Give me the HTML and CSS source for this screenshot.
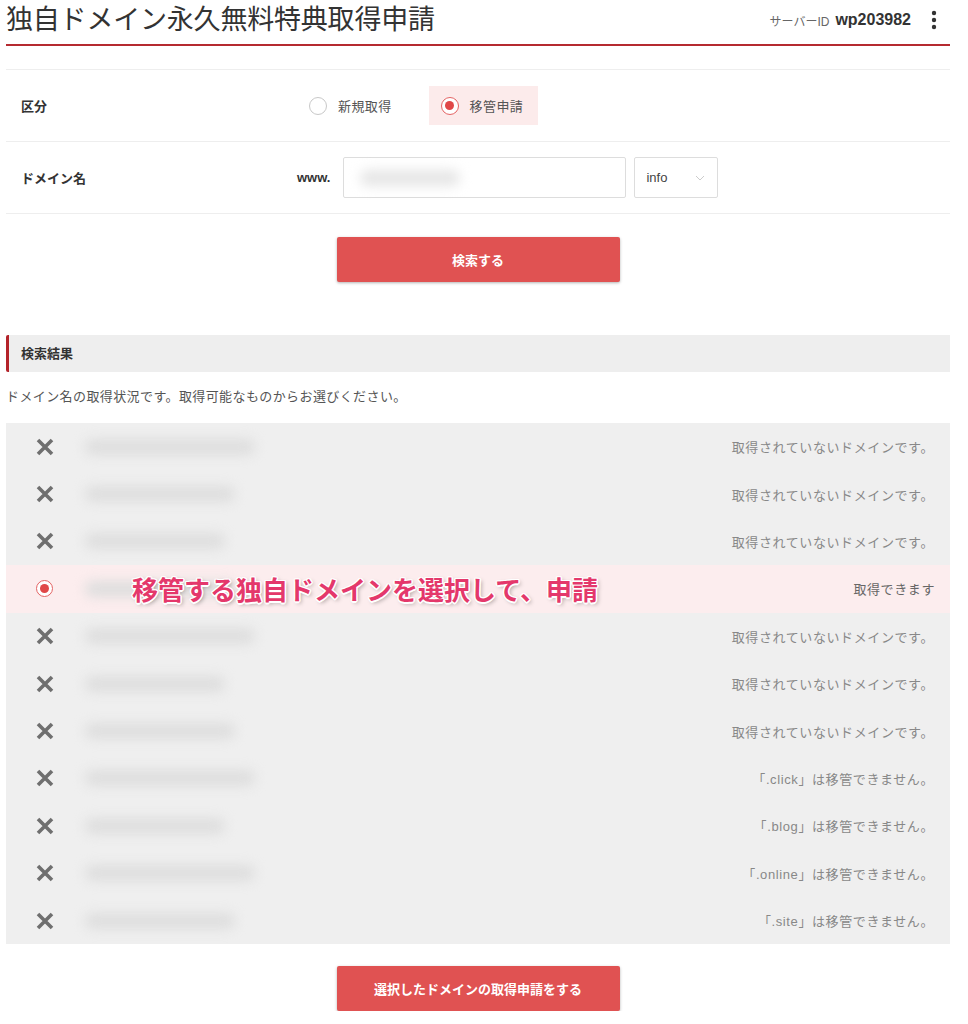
FILE: index.html
```html
<!DOCTYPE html>
<html lang="ja">
<head>
  <meta charset="UTF-8"/>
  <meta name="viewport" content="width=device-width, initial-scale=1.0"/>
  <title>独自ドメイン永久無料特典取得申請</title>
  <link rel="stylesheet" href="styles.css">
</head>
<body>
  <div class="page">

    <!-- Header -->
    <div class="header">
      <h1 class="title">独自ドメイン永久無料特典取得申請</h1>
      <div class="server">
        <span class="server-label">サーバーID</span>
        <span class="server-id">wp203982</span>
        <svg class="kebab" width="6" height="20" viewBox="0 0 6 20">
          <circle cx="3" cy="3" r="2.2" fill="#333"/>
          <circle cx="3" cy="10" r="2.2" fill="#333"/>
          <circle cx="3" cy="17" r="2.2" fill="#333"/>
        </svg>
      </div>
    </div>

    <!-- Form -->
    <div class="form">
      <div class="form-row">
        <div class="form-label">区分</div>
        <div class="form-field">
          <label class="option"><span class="radio"></span>新規取得</label>
          <label class="option option-on"><span class="radio radio-on"></span>移管申請</label>
        </div>
      </div>
      <div class="form-row">
        <div class="form-label">ドメイン名</div>
        <div class="form-field">
          <span class="www">www.</span>
          <div class="text-box"><span class="blur blur-input"></span></div>
          <div class="select-box">
            <span>info</span>
            <svg width="10" height="6" viewBox="0 0 10 6"><polyline points="1,1 5,5 9,1" fill="none" stroke="#ccc" stroke-width="1"/></svg>
          </div>
        </div>
      </div>
    </div>

    <div class="actions">
      <button class="btn">検索する</button>
    </div>

    <!-- Results -->
    <h2 class="section-title">検索結果</h2>
    <p class="desc">ドメイン名の取得状況です。取得可能なものからお選びください。</p>

    <ul class="results">
      <li class="result">
        <svg class="cross" width="18" height="18" viewBox="0 0 18 18"><path d="M2 2L16 16M16 2L2 16" stroke="#6f6f6f" stroke-width="3.6"/></svg>
        <span class="blur w1"></span>
        <span class="status">取得されていないドメインです。</span>
      </li>
      <li class="result">
        <svg class="cross" width="18" height="18" viewBox="0 0 18 18"><path d="M2 2L16 16M16 2L2 16" stroke="#6f6f6f" stroke-width="3.6"/></svg>
        <span class="blur w2"></span>
        <span class="status">取得されていないドメインです。</span>
      </li>
      <li class="result">
        <svg class="cross" width="18" height="18" viewBox="0 0 18 18"><path d="M2 2L16 16M16 2L2 16" stroke="#6f6f6f" stroke-width="3.6"/></svg>
        <span class="blur w3"></span>
        <span class="status">取得されていないドメインです。</span>
      </li>
      <li class="result result-on">
        <span class="radio radio-on radio-small"></span>
        <span class="blur w2"></span>
        <span class="status">取得できます</span>
        <span class="note">移管する独自ドメインを選択して、申請</span>
      </li>
      <li class="result">
        <svg class="cross" width="18" height="18" viewBox="0 0 18 18"><path d="M2 2L16 16M16 2L2 16" stroke="#6f6f6f" stroke-width="3.6"/></svg>
        <span class="blur w1"></span>
        <span class="status">取得されていないドメインです。</span>
      </li>
      <li class="result">
        <svg class="cross" width="18" height="18" viewBox="0 0 18 18"><path d="M2 2L16 16M16 2L2 16" stroke="#6f6f6f" stroke-width="3.6"/></svg>
        <span class="blur w3"></span>
        <span class="status">取得されていないドメインです。</span>
      </li>
      <li class="result">
        <svg class="cross" width="18" height="18" viewBox="0 0 18 18"><path d="M2 2L16 16M16 2L2 16" stroke="#6f6f6f" stroke-width="3.6"/></svg>
        <span class="blur w2"></span>
        <span class="status">取得されていないドメインです。</span>
      </li>
      <li class="result">
        <svg class="cross" width="18" height="18" viewBox="0 0 18 18"><path d="M2 2L16 16M16 2L2 16" stroke="#6f6f6f" stroke-width="3.6"/></svg>
        <span class="blur w1"></span>
        <span class="status">「.click」は移管できません。</span>
      </li>
      <li class="result">
        <svg class="cross" width="18" height="18" viewBox="0 0 18 18"><path d="M2 2L16 16M16 2L2 16" stroke="#6f6f6f" stroke-width="3.6"/></svg>
        <span class="blur w3"></span>
        <span class="status">「.blog」は移管できません。</span>
      </li>
      <li class="result">
        <svg class="cross" width="18" height="18" viewBox="0 0 18 18"><path d="M2 2L16 16M16 2L2 16" stroke="#6f6f6f" stroke-width="3.6"/></svg>
        <span class="blur w1"></span>
        <span class="status">「.online」は移管できません。</span>
      </li>
      <li class="result">
        <svg class="cross" width="18" height="18" viewBox="0 0 18 18"><path d="M2 2L16 16M16 2L2 16" stroke="#6f6f6f" stroke-width="3.6"/></svg>
        <span class="blur w2"></span>
        <span class="status">「.site」は移管できません。</span>
      </li>
    </ul>

    <div class="actions actions-bottom">
      <button class="btn">選択したドメインの取得申請をする</button>
    </div>

  </div>
</body>
</html>
```

FILE: styles.css
```css
body {
  margin: 0;
  background: #fff;
  color: #333;
  font-family: "Liberation Sans", "Noto Sans CJK JP", sans-serif;
}

.page {
  width: 944px;
  margin-left: 6px;
}

/* header */
.header {
  display: flex;
  align-items: center;
  justify-content: space-between;
  height: 36px;
  padding-bottom: 8px;
  border-bottom: 2px solid #b52a30;
}

.title {
  margin: 0;
  font-family: "Noto Sans CJK JP", sans-serif;
  font-size: 27px;
  font-weight: normal;
  line-height: 36px;
  letter-spacing: -0.2px;
  color: #333;
}

.server {
  display: flex;
  align-items: center;
  padding-top: 4px;
}

.server-label {
  font-size: 12px;
  color: #666;
}

.server-id {
  margin-left: 6px;
  font-size: 16px;
  font-weight: bold;
  color: #333;
}

.kebab {
  margin-left: 20px;
  margin-right: 13px;
}

/* form */
.form {
  margin-top: 23px;
  border-top: 1px solid #eee;
}

.form-row {
  display: flex;
  align-items: center;
  height: 71px;
  border-bottom: 1px solid #eee;
}

.form-label {
  box-sizing: border-box;
  width: 291px;
  padding-left: 15px;
  font-size: 13px;
  font-weight: bold;
  color: #333;
}

.form-field {
  display: flex;
  align-items: center;
}

.option {
  display: flex;
  align-items: center;
  height: 39px;
  padding: 0 15px 0 12px;
  margin-right: 22px;
  font-size: 13px;
  letter-spacing: 0.4px;
  color: #555;
}

.option-on {
  background: #fcebeb;
}

.radio {
  box-sizing: border-box;
  width: 18px;
  height: 18px;
  margin-right: 11px;
  border: 1px solid #c8c8c8;
  border-radius: 50%;
  background: #fff;
}

.radio-on {
  position: relative;
  border: 1.5px solid #e46464;
}

.radio-on::after {
  content: "";
  position: absolute;
  top: 3px;
  left: 3px;
  width: 9px;
  height: 9px;
  border-radius: 50%;
  background: #e04848;
}

.www {
  margin-right: 13px;
  font-size: 13px;
  font-weight: bold;
  color: #333;
}

.text-box {
  box-sizing: border-box;
  display: flex;
  align-items: center;
  width: 283px;
  height: 41px;
  padding-left: 16px;
  border: 1px solid #ddd;
  border-radius: 2px;
  background: #fff;
}

.select-box {
  box-sizing: border-box;
  display: flex;
  align-items: center;
  justify-content: space-between;
  width: 84px;
  height: 41px;
  margin-left: 8px;
  padding: 0 12px 0 11px;
  border: 1px solid #ddd;
  border-radius: 2px;
  font-size: 13px;
  color: #444;
}

/* buttons */
.actions {
  display: flex;
  justify-content: center;
  margin-top: 23px;
}

.actions-bottom {
  margin-top: 22px;
}

.btn {
  width: 283px;
  height: 45px;
  border: none;
  border-radius: 2px;
  background: #e05252;
  box-shadow: 0 1px 3px rgba(0, 0, 0, 0.3);
  color: #fff;
  font-family: "Noto Sans CJK JP", sans-serif;
  font-size: 13px;
  font-weight: bold;
  cursor: pointer;
}

/* results */
.section-title {
  margin: 53px 0 0;
  height: 37px;
  padding-left: 12px;
  border-left: 3px solid #b3232a;
  border-radius: 2px 0 0 2px;
  background: #eee;
  font-size: 13px;
  font-weight: bold;
  line-height: 37px;
  color: #333;
}

.desc {
  margin: 15px 0 16px;
  font-size: 13px;
  line-height: 20px;
  letter-spacing: 0.4px;
  color: #555;
}

.results {
  margin: 0;
  padding: 0;
  list-style: none;
  background: #efefef;
}

.result {
  position: relative;
  display: flex;
  align-items: center;
  height: 47.4px;
  padding: 0 16px 0 30px;
}

.cross {
  flex: none;
  margin-right: 31px;
}

.result-on {
  background: #fcedee;
  padding-right: 15px;
}

.radio-small {
  flex: none;
  width: 17px;
  height: 17px;
  margin: 0 32px 0 0;
}

.radio-small::after {
  top: 2.5px;
  left: 2.5px;
  width: 9px;
  height: 9px;
}

.blur {
  display: inline-block;
  height: 16px;
  border-radius: 8px;
  background: #dedede;
  filter: blur(6px);
}

.blur-input {
  width: 100px;
  background: #e6e6e6;
}

.w1 { width: 170px; }
.w2 { width: 150px; }
.w3 { width: 140px; }

.status {
  margin-left: auto;
  font-size: 13px;
  letter-spacing: 0.6px;
  color: #888;
}

.result-on .status {
  color: #666;
}

.note {
  position: absolute;
  top: 0;
  left: 126px;
  font-family: "Noto Sans CJK JP", sans-serif;
  font-size: 26px;
  font-weight: bold;
  line-height: 47px;
  color: #e4386b;
  text-shadow: 1.5px 0 0 #fff, -1.5px 0 0 #fff, 0 1.5px 0 #fff, 0 -1.5px 0 #fff,
    1px 1px 0 #fff, -1px -1px 0 #fff, 1px -1px 0 #fff, -1px 1px 0 #fff,
    2px 2px 4px rgba(0, 0, 0, 0.35);
}
```
